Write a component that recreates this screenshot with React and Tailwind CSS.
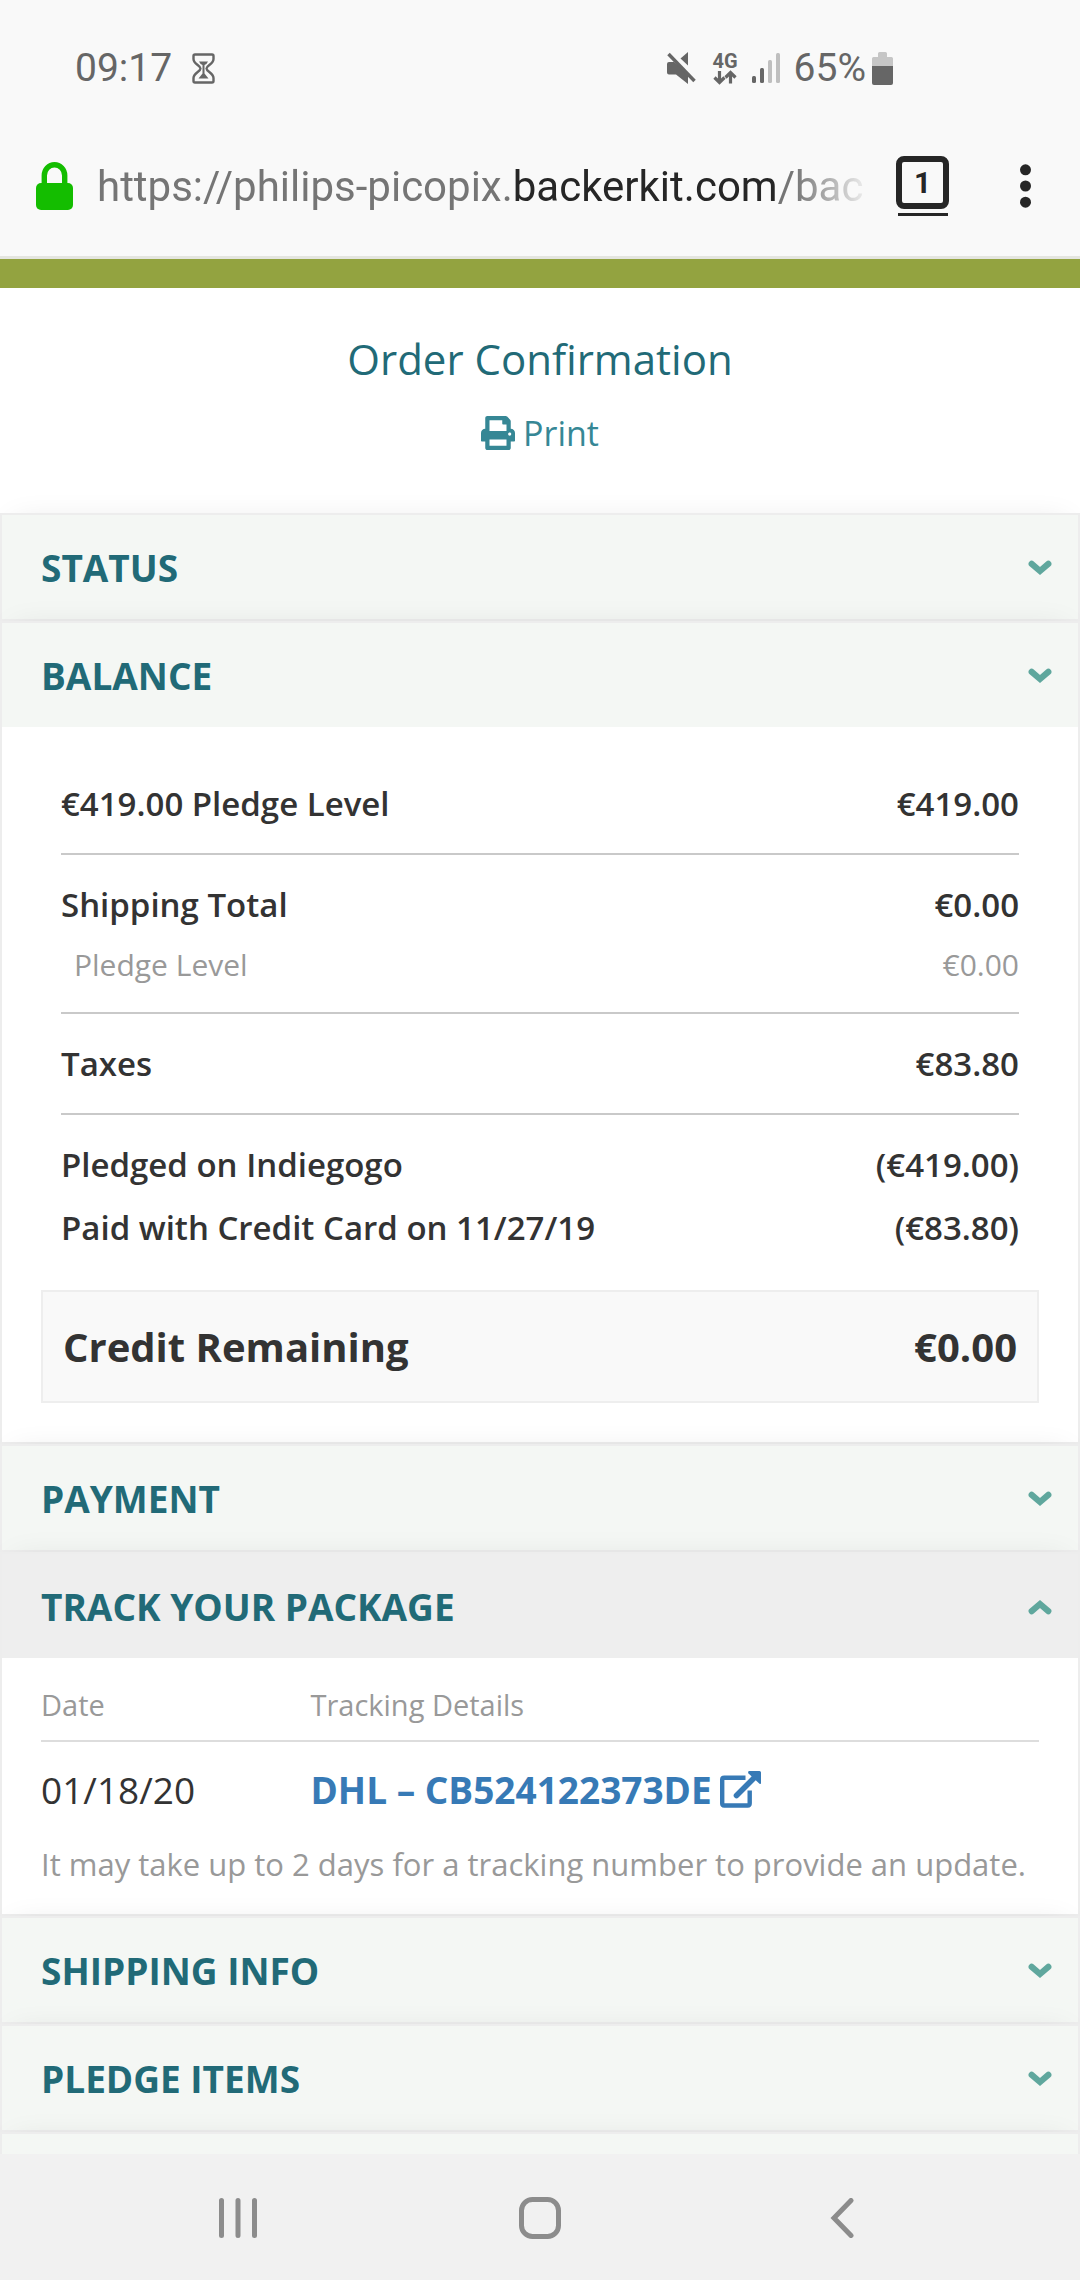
import { FaPrint } from "react-icons/fa";

const charges = [
  [{ label: "€419.00 Pledge Level", amount: "€419.00" }],
  [
    { label: "Shipping Total", amount: "€0.00" },
    { label: "Pledge Level", amount: "€0.00", minor: true },
  ],
  [{ label: "Taxes", amount: "€83.80" }],
  [
    { label: "Pledged on Indiegogo", amount: "(€419.00)" },
    { label: "Paid with Credit Card on 11/27/19", amount: "(€83.80)" },
  ],
];

function HourglassIcon() {
  return (
    <svg className="w-[23px] h-[31px]" viewBox="0 0 23 31" fill="none" aria-hidden="true">
      <path
        d="M3 1.5H20Q21.5 1.5 21.5 3V6C21.5 11 14.5 12.5 14.5 15.5S21.5 20 21.5 25V28Q21.5 29.5 20 29.5H3Q1.5 29.5 1.5 28V25C1.5 20 8.5 18.5 8.5 15.5S1.5 11 1.5 6V3Q1.5 1.5 3 1.5Z"
        stroke="#666"
        strokeWidth="2.4"
      />
      <path d="M7 8.5H16Q15 11 12.5 12V20.5L16.5 25.5H6.5L10.5 20.5V12Q8 11 7 8.5Z" fill="#666" />
    </svg>
  );
}

function MutedIcon() {
  return (
    <svg className="w-[29px] h-[32px]" viewBox="0 0 29 32" aria-hidden="true">
      <path d="M13.5 6.5L21 0V13.5Z" fill="#666" />
      <path d="M2 10H7L21 21V32L9 22.5H2Q0 22.5 0 20.5V12Q0 10 2 10Z" fill="#666" />
      <path d="M1.5 2L27.5 29" stroke="#666" strokeWidth="3.4" />
    </svg>
  );
}

function DataArrowsIcon() {
  return (
    <svg className="w-[24px] h-[15px]" viewBox="0 0 24 15" fill="none" stroke="#666" strokeWidth="3.2" aria-hidden="true">
      <path d="M6.5 1V12M1.5 7.5L6.5 12.5L11.5 7.5" />
      <path d="M17.5 13.5V3M12.5 7.5L17.5 2.5L22.5 7.5" />
    </svg>
  );
}

function SignalIcon() {
  return (
    <svg className="w-[28px] h-[32px]" viewBox="0 0 28 32" aria-hidden="true">
      <rect x="0" y="24" width="4" height="7" rx="1.5" fill="#666" />
      <rect x="8" y="16" width="4" height="15" rx="1.5" fill="#666" />
      <rect x="16" y="8" width="4" height="23" rx="1.5" fill="#bfbfbf" />
      <rect x="24" y="1" width="4" height="30" rx="1.5" fill="#bfbfbf" />
    </svg>
  );
}

function BatteryIcon() {
  return (
    <svg className="w-[21px] h-[33px]" viewBox="0 0 21 33" aria-hidden="true">
      <path d="M6 1.5Q6 0 7.5 0H13.5Q15 0 15 1.5V5H19.5Q21 5 21 6.5V14H0V6.5Q0 5 1.5 5H6Z" fill="#c6c6c6" />
      <path d="M0 14H21V31Q21 33 19 33H2Q0 33 0 31Z" fill="#666" />
    </svg>
  );
}

function LockIcon() {
  return (
    <svg className="w-[37px] h-[48px]" viewBox="0 0 37 48" aria-hidden="true">
      <path d="M8.3 24V13.5a10.2 10.7 0 0 1 20.4 0V24" fill="none" stroke="#14bd00" strokeWidth="5.4" />
      <rect x="0" y="21" width="37" height="27" rx="5" fill="#14bd00" />
    </svg>
  );
}

function Chevron({ up = false }) {
  return (
    <svg className="w-6 h-4" viewBox="0 0 24 16" fill="none" aria-hidden="true">
      <path
        d={up ? "M3.7 12.2L12 5L20.3 12.2" : "M3.7 3.8L12 11L20.3 3.8"}
        stroke="#5fa79d"
        strokeWidth="6.2"
        strokeLinecap="round"
        strokeLinejoin="miter"
      />
    </svg>
  );
}

function ExternalIcon() {
  return (
    <svg className="w-[41px] h-[37px]" viewBox="0 0 41 37" fill="none" aria-hidden="true">
      <path d="M25.5 6.8H4.2Q2.2 6.8 2.2 8.8V32.3Q2.2 34.5 4.2 34.5H27.7Q29.7 34.5 29.7 32.3V19.5" stroke="#377ab6" strokeWidth="4.4" />
      <path d="M16.5 24.5L35 6" stroke="#377ab6" strokeWidth="5.6" strokeLinecap="round" />
      <path d="M29 0H39.5Q41 0 41 1.5V12Q41 13.5 39.5 12.7L28.5 2.5Q27.5 0.5 29 0Z" fill="#377ab6" />
    </svg>
  );
}

function StatusBar() {
  return (
    <div className="flex items-center h-[136px] pl-[75px] pr-[187px] text-[39px] text-[#666]">
      <span>09:17</span>
      <span className="ml-5">
        <HourglassIcon />
      </span>
      <div className="flex items-center ml-auto">
        <MutedIcon />
        <div className="flex flex-col items-center ml-4 mr-[14px]">
          <span className="text-[20px] leading-[18px] font-bold">4G</span>
          <DataArrowsIcon />
        </div>
        <SignalIcon />
        <span className="ml-[14px] mr-[6px]">65%</span>
        <BatteryIcon />
      </div>
    </div>
  );
}

function AddressBar() {
  return (
    <div className="flex items-center h-[100px] mb-5 pl-9 pr-[49px]">
      <LockIcon />
      <button
        type="button"
        className="flex-1 min-w-0 ml-6 mr-6 overflow-hidden whitespace-nowrap text-left text-[42px] text-[#757575] mask-r-from-[90%]"
      >
        https://philips-picopix.<span className="text-[#262626]">backerkit.com</span>/bac
      </button>
      <button type="button" aria-label="Open tabs" className="flex flex-col items-center gap-1">
        <span className="flex items-center justify-center size-[53px] rounded-lg border-6 border-[#262626] text-[30px] font-bold text-[#262626]">
          1
        </span>
        <span className="w-[50px] h-[3px] bg-[#262626]" />
      </button>
      <button type="button" aria-label="Menu" className="ml-[71px]">
        <svg className="w-[11px] h-[44px]" viewBox="0 0 11 44" fill="#262626" aria-hidden="true">
          <circle cx="5.5" cy="5.8" r="5.5" />
          <circle cx="5.5" cy="22" r="5.5" />
          <circle cx="5.5" cy="38.2" r="5.5" />
        </svg>
      </button>
    </div>
  );
}

function Section({ title, active = false, children }) {
  return (
    <section className="relative border-2 border-[#ededed] bg-white shadow-[0_-6px_30px_-14px_rgba(0,0,0,0.1)]">
      <h2>
        <button
          type="button"
          aria-expanded={Boolean(children)}
          className={`flex items-center justify-between w-full h-[104px] pt-0.5 pl-[39px] pr-[26px] text-[37px] font-bold uppercase text-[#216a77] ${
            active ? "bg-[#eee]" : "bg-[#f4f7f4]"
          }`}
        >
          {title}
          {title && <Chevron up={active} />}
        </button>
      </h2>
      {children}
    </section>
  );
}

function Balance() {
  return (
    <div className="px-[39px] pt-[27px] pb-[39px] text-[#333]">
      <div className="px-5">
        {charges.map((group, i) => (
          <dl key={i} className="py-[18px] border-b-2 border-[#c9c9c9] last:border-b-0">
            {group.map((row) => (
              <div
                key={row.label}
                className={`flex justify-between ${
                  row.minor ? "pl-[13px] text-[30px] leading-[58px] text-[#999]" : "text-[33px] leading-[63px] font-semibold"
                }`}
              >
                <dt>{row.label}</dt>
                <dd>{row.amount}</dd>
              </div>
            ))}
          </dl>
        ))}
      </div>
      <div className="flex items-center justify-between h-[113px] mt-[13px] px-5 border-2 border-[#eee] bg-[#f9f9f9] text-[40px] font-bold">
        <span>Credit Remaining</span>
        <span>€0.00</span>
      </div>
    </div>
  );
}

function Tracking() {
  return (
    <div className="px-[39px] pb-[26px]">
      <table className="w-full text-left">
        <thead>
          <tr className="border-b-2 border-[#ddd] text-[29px] leading-[46px] text-[#999]">
            <th className="w-[27%] pt-6 pb-3 font-normal">Date</th>
            <th className="pt-6 pb-3 font-normal">Tracking Details</th>
          </tr>
        </thead>
        <tbody>
          <tr className="text-[37px] leading-[63px]">
            <td className="pt-4 text-[#333]">01/18/20</td>
            <td className="pt-4">
              <a href="#tracking" className="flex items-center gap-2 font-bold text-[#377ab6]">
                DHL – CB524122373DE
                <ExternalIcon />
              </a>
            </td>
          </tr>
        </tbody>
      </table>
      <p className="mt-[19px] text-[31px] leading-[48px] text-[#999]">
        It may take up to 2 days for a tracking number to provide an update.
      </p>
    </div>
  );
}

function SystemNav() {
  return (
    <nav className="grid grid-cols-3 shrink-0 h-[126px] px-[87px] pt-0.5 bg-[#f1f1f1]">
      <button type="button" aria-label="Recent apps" className="flex items-center justify-center">
        <svg className="w-[38px] h-[40px]" viewBox="0 0 38 40" stroke="#8c8c8c" strokeWidth="5" strokeLinecap="round" aria-hidden="true">
          <path d="M2.5 2.5V37.5M19 2.5V37.5M35.5 2.5V37.5" />
        </svg>
      </button>
      <button type="button" aria-label="Home" className="flex items-center justify-center">
        <svg className="w-[42px] h-[42px]" viewBox="0 0 42 42" fill="none" stroke="#8c8c8c" strokeWidth="5" aria-hidden="true">
          <rect x="2.5" y="2.5" width="37" height="37" rx="11" />
        </svg>
      </button>
      <button type="button" aria-label="Back" className="flex items-center justify-center">
        <svg className="w-[24px] h-[40px]" viewBox="0 0 24 40" fill="none" stroke="#8c8c8c" strokeWidth="5" strokeLinecap="round" aria-hidden="true">
          <path d="M21 2.5L4 20L21 37.5" />
        </svg>
      </button>
    </nav>
  );
}

export default function App() {
  return (
    <div className="flex flex-col h-screen bg-white font-['Open_Sans',sans-serif]">
      <header className="shrink-0 border-b-3 border-[#e4e5df] bg-[#f9f9f9] font-[Roboto,sans-serif]">
        <StatusBar />
        <AddressBar />
      </header>

      <main className="flex-1 min-h-0 overflow-hidden border-t-[29px] border-[#93a340]">
        <div className="flex flex-col items-center pt-[43px] pb-14">
          <h1 className="text-[42px] leading-[56px] text-[#216a77]">Order Confirmation</h1>
          <button type="button" className="flex items-center gap-2 mt-[22px] text-[34px] leading-[48px] text-[#368795]">
            <FaPrint />
            Print
          </button>
        </div>

        <Section title="Status" />
        <Section title="Balance">
          <Balance />
        </Section>
        <Section title="Payment" />
        <Section title="Track Your Package" active>
          <Tracking />
        </Section>
        <Section title="Shipping Info" />
        <Section title="Pledge Items" />
        <Section />
      </main>

      <SystemNav />
    </div>
  );
}
